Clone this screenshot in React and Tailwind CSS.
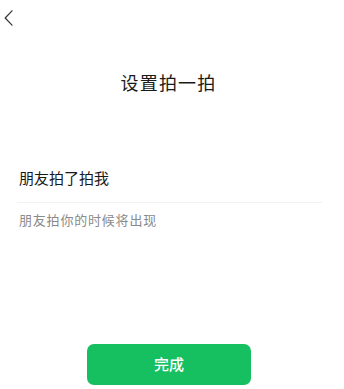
export default function App() {
  const font = { fontFamily: '"Noto Sans CJK SC", "Noto Sans", sans-serif' };
  return (
    <div className="w-[344px] h-[389px] bg-white overflow-hidden flex flex-col" style={font}>
      <div className="pt-[10px] pl-[4px]">
        <svg width="9" height="16" viewBox="0 0 9 16" fill="none">
          <path d="M8 0.8 L1.2 8 L8 15.2" stroke="#333" strokeWidth="1.2" strokeLinecap="round" strokeLinejoin="round" />
        </svg>
      </div>
      <div className="mt-[44px] pr-[7px] text-center text-[18px] leading-[24px] font-normal text-[#1a1a1a] tracking-[1.2px]">
        设置拍一拍
      </div>
      <div className="mt-[74px] px-[19px] text-[15px] leading-[20px] text-[#191919]">
        朋友拍了拍我
      </div>
      <div className="mt-[14px] mx-[17px] mr-[22px] h-px bg-[#f2f2f2]" />
      <div className="mt-[8px] px-[19px] text-[13px] leading-[18px] text-[#8a8a8a] tracking-[0.8px]">
        朋友拍你的时候将出现
      </div>
      <div className="mt-[115px] flex pl-[87px]">
        <button className="w-[164px] h-[41px] rounded-[7px] bg-[#16c060] text-white text-[15px] font-medium flex items-center justify-center">
          完成
        </button>
      </div>
    </div>
  );
}
